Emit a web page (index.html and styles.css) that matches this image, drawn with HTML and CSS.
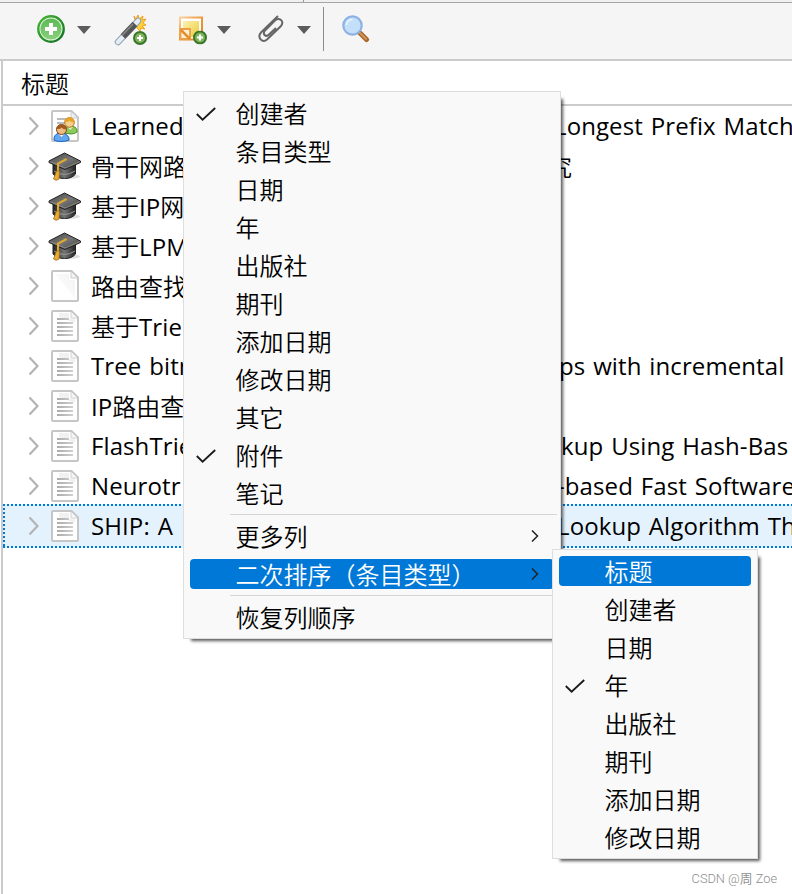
FILE: index.html
```html
<!DOCTYPE html>
<html lang="zh-CN">
<head>
    <meta charset="UTF-8">
    <meta name="viewport" content="width=device-width, initial-scale=1.0">
    <title>Zotero</title>
    <link rel="stylesheet" href="styles.css">
</head>
<body>
    <!-- Shared icons -->
    <svg class="icon-defs" width="0" height="0">
        <defs>
            <linearGradient id="greenFill" x1="0" y1="0" x2="0" y2="1">
                <stop offset="0" stop-color="#5cbb55"/><stop offset="1" stop-color="#87d07a"/>
            </linearGradient>
            <linearGradient id="greenRing" x1="0" y1="0" x2="1" y2="1">
                <stop offset="0" stop-color="#49b637"/><stop offset="1" stop-color="#126f22"/>
            </linearGradient>
            <linearGradient id="noteFill" x1="0" y1="0" x2="1" y2="1">
                <stop offset="0" stop-color="#fff3b0"/><stop offset="1" stop-color="#e9c93c"/>
            </linearGradient>
            <linearGradient id="noteRing" x1="0" y1="0" x2="1" y2="1">
                <stop offset="0" stop-color="#f9d0a0"/><stop offset=".5" stop-color="#ec9a3c"/><stop offset="1" stop-color="#e08416"/>
            </linearGradient>
            <linearGradient id="capTop" x1="0" y1="0" x2="1" y2="1">
                <stop offset="0" stop-color="#444"/><stop offset=".5" stop-color="#777"/><stop offset="1" stop-color="#3a3a3a"/>
            </linearGradient>
            <linearGradient id="capBase" x1="0" y1="0" x2="1" y2="0">
                <stop offset="0" stop-color="#222"/><stop offset=".5" stop-color="#777"/><stop offset="1" stop-color="#222"/>
            </linearGradient>
            <linearGradient id="lineFill" x1="0" y1="0" x2="1" y2="0">
                <stop offset="0" stop-color="#aaa"/><stop offset="1" stop-color="#d0d0d0"/>
            </linearGradient>
            <linearGradient id="foldFill" x1="0" y1="1" x2="1" y2="0">
                <stop offset="0" stop-color="#fff"/><stop offset="1" stop-color="#ddd"/>
            </linearGradient>
        </defs>
        <symbol id="page" viewBox="0 0 28 32">
            <path d="M2 1h18.5L27 7.500V30a1 1 0 0 1-1 1H2a1 1 0 0 1-1-1V2a1 1 0 0 1 1-1z" fill="#fff" stroke="#c6c6c6" stroke-width="2"/>
            <path d="M4 4h14v6h6v18z" fill="url(#foldFill)" opacity=".35"/>
            <path d="M20 2v6h6" fill="#f3f3f3" stroke="#ccc" stroke-width="1"/>
        </symbol>
        <symbol id="article" viewBox="0 0 28 32">
            <path d="M2 1h18.500L27 7.500V30a1 1 0 0 1-1 1H2a1 1 0 0 1-1-1V2a1 1 0 0 1 1-1z" fill="#fff" stroke="#c6c6c6" stroke-width="2"/>
            <path d="M8 3h10v6h6v4L8 7z" fill="#f1f1f1"/>
            <path d="M20 2v6h6" fill="#f7f7f7" stroke="#d2d2d2" stroke-width="1"/>
            <path d="M6 8h12v2H6zM6 12h16v2H6zM6 16h16v2H6zM6 20h16v2H6zM6 24h16v2H6z" fill="url(#lineFill)"/>
        </symbol>
        <symbol id="conference" viewBox="0 0 28 32">
            <path d="M2 1h18.500L27 7.500V30a1 1 0 0 1-1 1H2a1 1 0 0 1-1-1V2a1 1 0 0 1 1-1z" fill="#fff" stroke="#c6c6c6" stroke-width="2"/>
            <path d="M20 2v6h6" fill="#eee" stroke="#ccc"/>
            <path d="M6 8h10v2H6zM6 12h8v2H6z" fill="#bbb"/>
            <path d="M13 23v-2q1-5 6-5 6 0 7 4v2q-2 2-6 2z" fill="#8bc95b" stroke="#4c9427"/>
            <path d="m17 17 2 3 3-3z" fill="#e8f6d8"/>
            <circle cx="18.500" cy="12.500" r="4.800" fill="#f5cf8e" stroke="#b66e17"/>
            <path d="M13.500 12q0-4.500 5-4.500t5 5q-3 .5-5-2-1 2-5 1.500z" fill="#e8a427"/>
            <path d="M3 30v-2q1-5 7-5t8 5v2q-3 1.500-8 1.500T3 30z" fill="#63a7ed" stroke="#1c67c6"/>
            <path d="m7.500 24 3 3 3-3z" fill="#eaf4ff"/>
            <circle cx="10.500" cy="19.500" r="5" fill="#efbd83" stroke="#7d4212"/>
            <path d="M5.500 19q0-4.500 5-4.500t5 5q-3 .5-5-2-1 2-5 1.500z" fill="#a35a20"/>
        </symbol>
        <symbol id="thesis" viewBox="0 0 34 30">
            <ellipse cx="20" cy="24.500" rx="12" ry="2.500" fill="#ddd"/>
            <path d="M5 12v10q4 4.500 11.500 4.500T27.500 22V12z" fill="url(#capBase)" stroke="#222"/>
            <path d="M6 19q10 7 21 0" fill="none" stroke="#999" stroke-width="1"/>
            <path d="M1 9 16.500 1 32.500 9v1.500L17 17.500 1 10.500z" fill="url(#capTop)" stroke="#222" stroke-linejoin="round"/>
            <path d="m2 9.500 15 6.500 15-6.500" fill="none" stroke="#999" stroke-width=".7"/>
            <path d="M18.500 7 10 11.500V21" fill="none" stroke="#e3a92f" stroke-width="2"/>
            <path d="M8.500 19h3L11 27q-3 2.500-5.500 0z" fill="#e4ad3a" stroke="#a86d14" stroke-width=".8"/>
        </symbol>
        <symbol id="twisty" viewBox="0 0 12 20">
            <path d="m1.500 1.500 8 8.500-8 8.500" fill="none" stroke="#b4b4b4" stroke-width="2.200"/>
        </symbol>
        <symbol id="check" viewBox="0 0 20 14">
            <path d="m.8 7 5.800 5.700L19.200 1" fill="none" stroke="#1a1a1a" stroke-width="1.800"/>
        </symbol>
        <symbol id="arrow" viewBox="0 0 8 14">
            <path d="m1 1.500 5.500 5.500L1 12.500" fill="none" stroke="#222" stroke-width="1.500"/>
        </symbol>
        <symbol id="dropdown" viewBox="0 0 14 8">
            <path d="M0 0h14L7 8z" fill="#5c5c5c"/>
        </symbol>
        <symbol id="badge" viewBox="0 0 14 14">
            <circle cx="7" cy="7" r="6" fill="#7eb45c" stroke="#39752a" stroke-width="2"/>
            <path d="M6 4h2v2h2v2H8v2H6V8H4V6h2z" fill="#fff"/>
        </symbol>
    </svg>

    <div class="tab-strip"></div>

    <div class="toolbar">
        <svg class="icon-add" width="28" height="28" viewBox="0 0 28 28">
            <circle cx="14" cy="14" r="12.700" fill="#e9f7e5" stroke="url(#greenRing)" stroke-width="2.400"/>
            <circle cx="14" cy="14" r="10.600" fill="url(#greenFill)"/>
            <path d="M12 8h4v4h4v4h-4v4h-4v-4H8v-4h4z" fill="#fff"/>
        </svg>
        <svg class="icon-drop" width="14" height="8"><use href="#dropdown"/></svg>

        <svg class="icon-wand" width="34" height="32" viewBox="0 0 34 32">
            <path d="m20 2 2 3 2-4 1 4 4-3-1 4 4-1-3 4 3 2-4 1 3 3-4-1-1 3-3-3z" fill="#ffd236" stroke="#f3a020"/>
            <path d="M4 28 24 7" stroke="#8fa3b8" stroke-width="6.500" stroke-linecap="round"/>
            <path d="M4 28 24 7" stroke="#e5edf4" stroke-width="4.500" stroke-linecap="round"/>
            <path d="m9 22.500 12-12.500" stroke="#555" stroke-width="6.500"/>
            <path d="m8 21.500 11-11.500" stroke="#8a8a8a" stroke-width="1.500"/>
            <use href="#badge" x="19" y="17" width="14" height="14"/>
        </svg>

        <svg class="icon-note" width="29" height="29" viewBox="0 0 29 29">
            <rect x="1" y="1.500" width="22" height="22" fill="#fff" stroke="url(#noteRing)" stroke-width="2"/>
            <rect x="4" y="5" width="16" height="16" fill="url(#noteFill)"/>
            <path d="M1.500 13H11v10H1.500z" fill="#fff0d8" stroke="#eb9d47" stroke-width="1.800"/>
            <path d="m2 14 9 9" stroke="#e58e2c" stroke-width="2.500"/>
            <use href="#badge" x="14" y="14.500" width="14" height="14"/>
        </svg>
        <svg class="icon-drop" width="14" height="8"><use href="#dropdown"/></svg>

        <svg class="icon-clip" width="26" height="28" viewBox="0 0 26 28">
            <path d="M20 1 3 17.500C-1 22 4 29 9 24.500L23 11c4-5-2-9-6-5.500L7 15.500c-3 4 1 7 4 4l7-6.500" fill="none" stroke="#666" stroke-width="2"/>
        </svg>
        <svg class="icon-drop" width="14" height="8"><use href="#dropdown"/></svg>

        <div class="toolbar-separator"></div>

        <svg class="icon-search" width="28" height="28" viewBox="0 0 28 28">
            <path d="m17.500 17.500 7 7" stroke="#a8672b" stroke-width="5" stroke-linecap="round"/>
            <path d="m17.500 17.500 6.500 6.500" stroke="#cf9558" stroke-width="2" stroke-linecap="round"/>
            <circle cx="10.500" cy="10.500" r="9.200" fill="#c3dff9" stroke="#8cb2e3" stroke-width="2.200"/>
            <path d="M4.500 10a6 6 0 0 1 6-5.500" fill="none" stroke="#e2f1ff" stroke-width="2"/>
        </svg>
    </div>

    <div class="items-pane">
        <div class="column-header">标题</div>
        <div class="items-list">
            <div class="row">
                <svg class="twisty"><use href="#twisty"/></svg>
                <svg class="item-icon"><use href="#conference"/></svg>
                <span class="title latin">Learned</span>
                <span class="title-rest rest-longest latin">Longest Prefix Match</span>
            </div>
            <div class="row">
                <svg class="twisty"><use href="#twisty"/></svg>
                <svg class="item-icon thesis"><use href="#thesis"/></svg>
                <span class="title cjk">骨干网路</span>
                <span class="title-rest rest-study cjk">究</span>
            </div>
            <div class="row">
                <svg class="twisty"><use href="#twisty"/></svg>
                <svg class="item-icon thesis"><use href="#thesis"/></svg>
                <span class="title cjk">基于<span class="latin">IP</span>网</span>
            </div>
            <div class="row">
                <svg class="twisty"><use href="#twisty"/></svg>
                <svg class="item-icon thesis"><use href="#thesis"/></svg>
                <span class="title cjk">基于<span class="latin">LPM</span></span>
            </div>
            <div class="row">
                <svg class="twisty"><use href="#twisty"/></svg>
                <svg class="item-icon"><use href="#page"/></svg>
                <span class="title cjk">路由查找</span>
            </div>
            <div class="row">
                <svg class="twisty"><use href="#twisty"/></svg>
                <svg class="item-icon"><use href="#article"/></svg>
                <span class="title cjk">基于<span class="latin">Trie</span></span>
            </div>
            <div class="row">
                <svg class="twisty"><use href="#twisty"/></svg>
                <svg class="item-icon"><use href="#article"/></svg>
                <span class="title latin">Tree bitm</span>
                <span class="title-rest rest-maps latin">ps with incremental</span>
            </div>
            <div class="row">
                <svg class="twisty"><use href="#twisty"/></svg>
                <svg class="item-icon"><use href="#article"/></svg>
                <span class="title cjk"><span class="latin">IP</span>路由查</span>
            </div>
            <div class="row">
                <svg class="twisty"><use href="#twisty"/></svg>
                <svg class="item-icon"><use href="#article"/></svg>
                <span class="title latin">FlashTrie</span>
                <span class="title-rest rest-lookup latin">kup Using Hash-Bas</span>
            </div>
            <div class="row">
                <svg class="twisty"><use href="#twisty"/></svg>
                <svg class="item-icon"><use href="#article"/></svg>
                <span class="title latin">Neurotr</span>
                <span class="title-rest rest-based latin">-based Fast Software</span>
            </div>
            <div class="row selected">
                <svg class="twisty"><use href="#twisty"/></svg>
                <svg class="item-icon"><use href="#article"/></svg>
                <span class="title latin">SHIP: A</span>
                <span class="title-rest rest-algorithm latin">Lookup Algorithm Th</span>
            </div>
        </div>
    </div>

    <div class="menu column-menu">
        <div class="menu-item"><svg class="check"><use href="#check"/></svg>创建者</div>
        <div class="menu-item">条目类型</div>
        <div class="menu-item">日期</div>
        <div class="menu-item">年</div>
        <div class="menu-item">出版社</div>
        <div class="menu-item">期刊</div>
        <div class="menu-item">添加日期</div>
        <div class="menu-item">修改日期</div>
        <div class="menu-item">其它</div>
        <div class="menu-item"><svg class="check"><use href="#check"/></svg>附件</div>
        <div class="menu-item">笔记</div>
        <div class="menu-separator"></div>
        <div class="menu-item">更多列<svg class="arrow"><use href="#arrow"/></svg></div>
        <div class="menu-item active">二次排序（条目类型）<svg class="arrow"><use href="#arrow"/></svg></div>
        <div class="menu-separator"></div>
        <div class="menu-item">恢复列顺序</div>
    </div>

    <div class="menu sort-menu">
        <div class="menu-item active">标题</div>
        <div class="menu-item">创建者</div>
        <div class="menu-item">日期</div>
        <div class="menu-item"><svg class="check"><use href="#check"/></svg>年</div>
        <div class="menu-item">出版社</div>
        <div class="menu-item">期刊</div>
        <div class="menu-item">添加日期</div>
        <div class="menu-item">修改日期</div>
    </div>

    <div class="watermark">CSDN @周 Zoe</div>
</body>
</html>
```
FILE: styles.css
```css
:root {
    --accent: #0078d7;
    --line: #cbcbcb;
    --menu-bg: #f9f9f9;
}

* {
    margin: 0;
    padding: 0;
    box-sizing: border-box;
}

body {
    width: 792px;
    height: 894px;
    overflow: hidden;
    position: relative;
    display: flex;
    flex-direction: column;
    background: #fff;
    color: #000;
    font-family: 'Noto Sans CJK SC', sans-serif;
    font-size: 24px;
    font-weight: 350;
}

svg {
    display: block;
    flex: none;
}

.icon-defs {
    position: absolute;
}

.latin {
    font-family: 'Open Sans', 'Noto Sans', sans-serif;
    font-size: 24px;
    font-weight: 400;
    letter-spacing: 0.1px;
    word-spacing: 1.5px;
}

.tab-strip {
    flex: none;
    height: 3px;
    background: linear-gradient(#999, #999) 303px 0 / 1px 2px no-repeat, #f0f0f0;
    border-bottom: 1px solid #a5a5a5;
}

/* Toolbar */
.toolbar {
    flex: none;
    height: 58px;
    display: flex;
    align-items: center;
    padding: 0 0 4px 37px;
    background: #f5f5f5;
    border-bottom: 2px solid var(--line);
}

.icon-drop {
    margin: 2px 0 0 12px;
}

.icon-wand {
    margin: 2px 0 0 23px;
}

.icon-note {
    margin: 3px 0 0 31px;
}

.icon-note + .icon-drop {
    margin-left: 9px;
}

.icon-clip {
    margin-left: 27px;
}

.icon-clip + .icon-drop {
    margin-left: 13px;
}

.toolbar-separator {
    width: 1px;
    height: 44px;
    margin-left: 12px;
    background: #8d8d8d;
}

.icon-search {
    margin-left: 18px;
}

/* Items list */
.items-pane {
    flex: 1;
    margin-left: 1px;
    border-left: 2px solid var(--line);
}

.column-header {
    height: 45px;
    padding-left: 18px;
    line-height: 43px;
    border-bottom: 2px solid var(--line);
}

.row {
    height: 40px;
    display: grid;
    grid-template-columns: 12px 34px 92px 1fr;
    align-items: center;
    padding-left: 25px;
    line-height: 40px;
    white-space: nowrap;
}

.twisty {
    width: 12px;
    height: 20px;
}

.item-icon {
    width: 28px;
    height: 32px;
    margin-left: 11px;
}

.item-icon.thesis {
    width: 34px;
    height: 30px;
    margin: 2px 0 0 8px;
}

.title {
    margin-left: 17px;
    width: 95px;
    height: 40px;
    overflow: hidden;
}

.title-rest {
    height: 40px;
    overflow: hidden;
}

.cjk {
    line-height: 39px;
}

.rest-longest { margin-left: 388px; }
.rest-study { margin-left: 382px; }
.rest-maps { margin-left: 393px; }
.rest-lookup { margin-left: 395px; }
.rest-based { margin-left: 391px; }
.rest-algorithm { margin-left: 391px; }

.row.selected {
    height: 44px;
    margin-top: -2px;
    background:
        repeating-linear-gradient(90deg, var(--accent) 0 2px, transparent 2px 4px) 0 0 / 100% 2px no-repeat,
        repeating-linear-gradient(90deg, var(--accent) 0 2px, transparent 2px 4px) 0 100% / 100% 2px no-repeat,
        repeating-linear-gradient(var(--accent) 0 2px, transparent 2px 4px) 0 0 / 2px 100% no-repeat,
        #e4f2fe;
}

/* Popup menus */
.menu {
    position: absolute;
    background: var(--menu-bg);
    border: 1px solid #dedede;
    padding: 2px 6px;
    box-shadow: 5px 5px 3px -3px rgba(0, 0, 0, 0.65);
}

.column-menu {
    left: 183px;
    top: 91px;
    width: 378px;
    height: 548px;
}

.sort-menu {
    left: 552px;
    top: 549px;
    width: 206px;
    height: 310px;
}

.menu-item {
    display: flex;
    align-items: center;
    position: relative;
    height: 30px;
    margin: 4px 0 8px;
    padding-left: 45.5px;
    line-height: 30px;
    border-radius: 4px;
    white-space: nowrap;
}

.menu-item + .menu-item {
    margin-top: 8px;
}

.menu-item.active {
    background: var(--accent);
    color: #fff;
}

.check {
    position: absolute;
    left: 6px;
    top: 9px;
    width: 20px;
    height: 14px;
}

.arrow {
    width: 8px;
    height: 14px;
    margin-left: auto;
    margin-right: 15px;
}

.menu-separator {
    height: 1px;
    margin: -2px -3px 6px 40px;
    background: #d5d5d5;
}

.watermark {
    position: absolute;
    right: 15px;
    bottom: 6px;
    font-family: Roboto, 'Noto Sans CJK SC', sans-serif;
    font-size: 12.8px;
    line-height: 18px;
    color: #8e8e8e;
}
```
